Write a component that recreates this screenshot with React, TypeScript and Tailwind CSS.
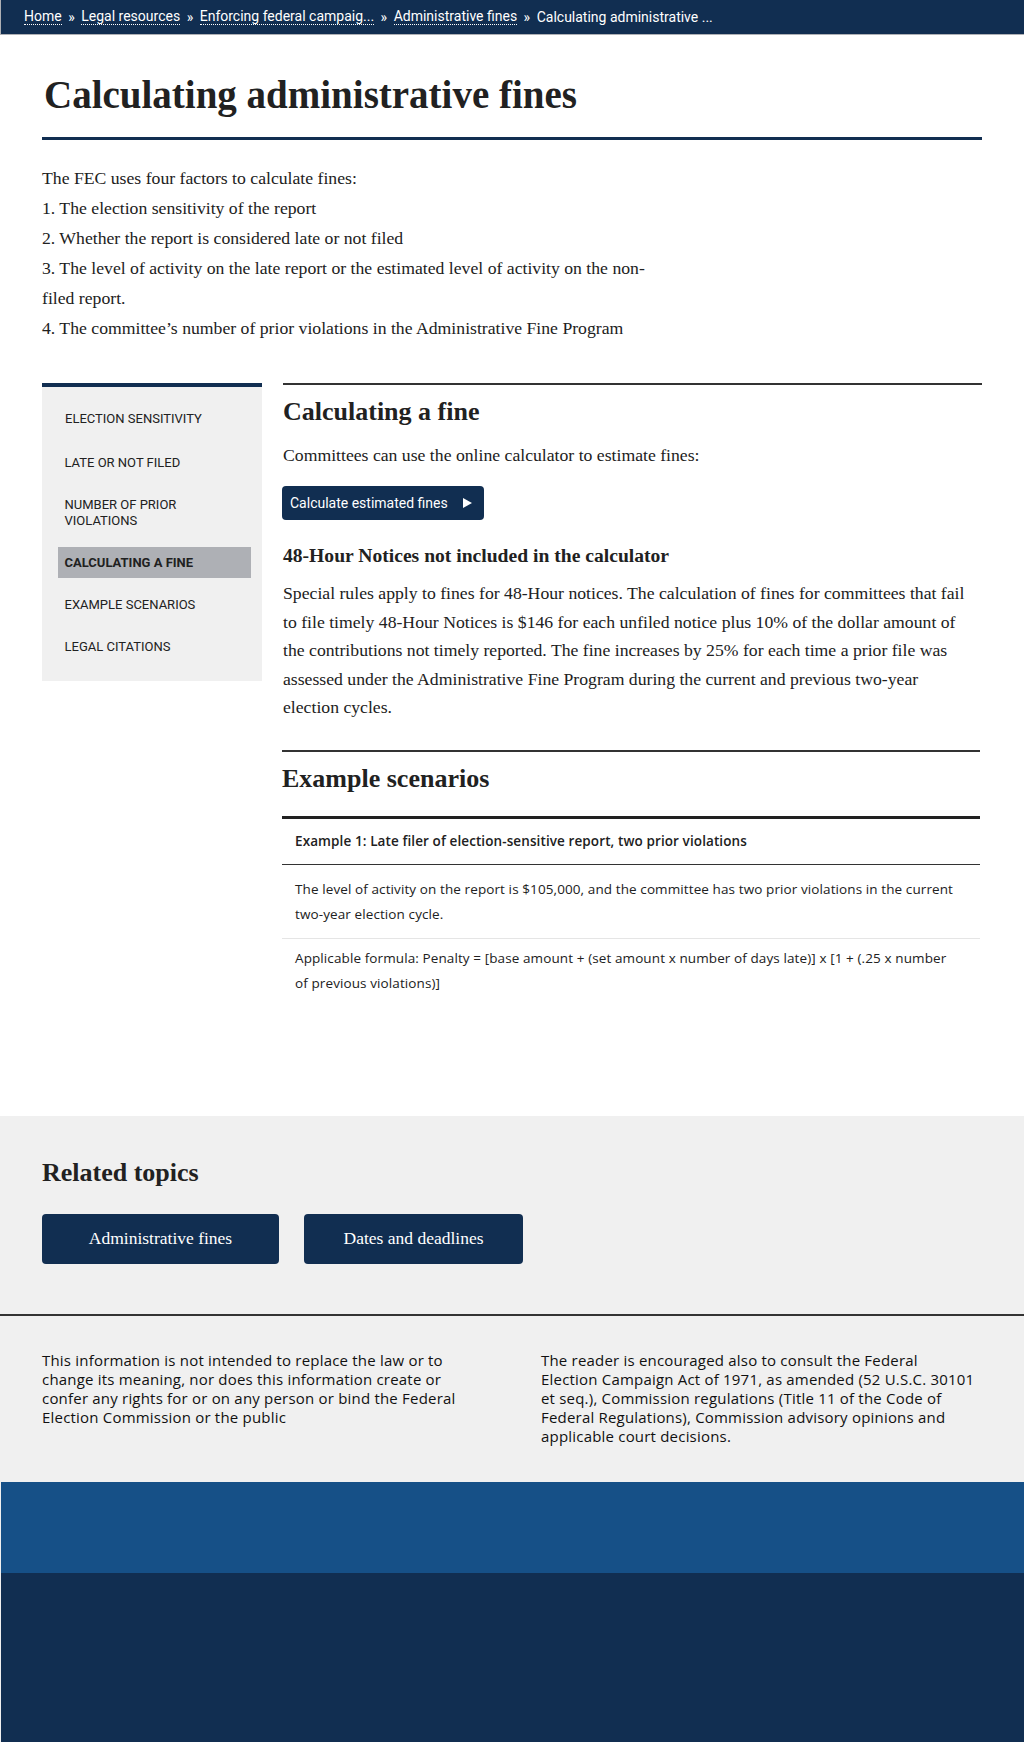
import React from "react";

const serif = { fontFamily: '"Liberation Serif", "Times New Roman", serif' };
const sans = { fontFamily: 'Roboto, "Liberation Sans", Arial, sans-serif' };
const wide = { fontFamily: '"Open Sans", Roboto, Arial, sans-serif' };

function Crumb({ children }: { children: React.ReactNode }) {
  return (
    <span className="border-b border-dotted border-white leading-[15px]">{children}</span>
  );
}

function Sep() {
  return <span className="mx-[6.5px]">»</span>;
}

const navItems = [
  "Election sensitivity",
  "Late or not filed",
  "Number of prior violations",
  "Calculating a fine",
  "Example scenarios",
  "Legal citations",
];

export default function App() {
  return (
    <div className="w-[1024px] bg-white text-[#212121]" style={sans}>
      {/* Breadcrumb */}
      <div className="h-[35px] bg-[#112e51] border-l border-b border-[#aeb0b5] flex items-center pl-[23px] text-[14px] text-white">
        <Crumb>Home</Crumb>
        <Sep />
        <Crumb>Legal resources</Crumb>
        <Sep />
        <Crumb>Enforcing federal campaig...</Crumb>
        <Sep />
        <Crumb>Administrative fines</Crumb>
        <Sep />
        <span>Calculating administrative ...</span>
      </div>

      <div className="px-[42px]">
        {/* Title */}
        <div className="pt-[37px] pb-[19px] border-b-[3px] border-[#112e51]">
          <h1 className="text-[39px] leading-[46px] font-bold pl-[2px]" style={serif}>
            Calculating administrative fines
          </h1>
        </div>

        {/* Intro */}
        <div className="mt-[23px] max-w-[625px] text-[17.7px] leading-[30px]" style={serif}>
          The FEC uses four factors to calculate fines:
          <br />
          1. The election sensitivity of the report
          <br />
          2. Whether the report is considered late or not filed
          <br />
          3. The level of activity on the late report or the estimated level of activity on the non-filed report.
          <br />
          4. The committee’s number of prior violations in the Administrative Fine Program
        </div>

        {/* Sidebar + main */}
        <div className="mt-[40px] grid grid-cols-[220px_1fr] gap-[21px] pb-[119px] items-start">
          <nav className="border-t-4 border-[#112e51] bg-[#f0f0f0] pt-[16px] pb-[19px] pl-[16px] pr-[11px]">
            <ul className="flex flex-col gap-[11px]">
              {navItems.map((item, i) => {
                const active = item === "Calculating a fine";
                return (
                  <li
                    key={item}
                    className={
                      active
                        ? "bg-[#aeb0b5] px-[6.5px] py-[7.5px] text-[13px] leading-[16px] uppercase font-bold"
                        : i === 0
                        ? "px-[7px] py-[7.5px] mb-[2px] text-[13px] leading-[16px] uppercase"
                        : "px-[6.5px] py-[7.5px] text-[13px] leading-[16px] uppercase"
                    }
                  >
                    {item === "Number of prior violations" ? (
                      <>
                        Number of prior
                        <br />
                        violations
                      </>
                    ) : (
                      item
                    )}
                  </li>
                );
              })}
            </ul>
          </nav>

          <main>
            <section className="border-t-2 border-[#333333]">
              <h2 className="mt-[11px] text-[26px] leading-[31px] font-bold" style={serif}>
                Calculating a fine
              </h2>
              <p className="mt-[14px] text-[17.7px] leading-[28.5px]" style={serif}>
                Committees can use the online calculator to estimate fines:
              </p>
              <button className="mt-[16.5px] h-[34px] w-[202px] -ml-px rounded-[4px] bg-[#112e51] text-white text-[14px] flex items-center pl-[8px]">
                <span>Calculate estimated fines</span>
                <svg className="ml-[15px]" width="9" height="10" viewBox="0 0 9 10">
                  <path d="M0 0 L9 5 L0 10 Z" fill="white" />
                </svg>
              </button>
              <h3 className="mt-[24px] text-[19.6px] leading-[24px] font-bold" style={serif}>
                48-Hour Notices not included in the calculator
              </h3>
              <p className="mt-[11px] pr-[16px] text-[17.7px] leading-[28.5px]" style={serif}>
                Special rules apply to fines for 48-Hour notices. The calculation of fines for committees that fail to file timely 48-Hour Notices is $146 for each unfiled notice plus 10% of the dollar amount of the contributions not timely reported. The fine increases by 25% for each time a prior file was assessed under the Administrative Fine Program during the current and previous two-year election cycles.
              </p>
            </section>

            <section className="mt-[28px] border-t-2 border-[#333333] -ml-px mr-[2px]">
              <h2 className="mt-[11px] text-[26px] leading-[31px] font-bold" style={serif}>
                Example scenarios
              </h2>
              <div className="mt-[22px] border-t-[3px] border-[#212121]" style={wide}>
                <div className="pt-[11px] pb-[12px] pl-[13px] text-[13.5px] leading-[22px] tracking-[0.1px] font-semibold border-b border-[#333333]">
                  Example 1: Late filer of election-sensitive report, two prior violations
                </div>
                <div className="pt-[12px] pb-[10px] pl-[13px] pr-[24px] text-[13.5px] leading-[25.5px] tracking-[0.1px] border-b border-[#e5e5e5]">
                  The level of activity on the report is $105,000, and the committee has two prior violations in the current two-year election cycle.
                </div>
                <div className="pt-[7px] pl-[13px] pr-[24px] text-[13.5px] leading-[25.5px] tracking-[0.1px]">
                  Applicable formula: Penalty = [base amount + (set amount x number of days late)] x [1 + (.25 x number of previous violations)]
                </div>
              </div>
            </section>
          </main>
        </div>
      </div>

      {/* Related topics */}
      <div className="bg-[#f0f0f0] border-b-2 border-[#333333] px-[42px] pt-[41.5px] pb-[50px]">
        <h2 className="text-[26px] leading-[31px] font-bold" style={serif}>
          Related topics
        </h2>
        <div className="mt-[25.5px] flex gap-[25px]">
          <a className="w-[237px] h-[50px] rounded-[4px] bg-[#112e51] text-white text-[17.5px] flex items-center justify-center" style={serif}>
            Administrative fines
          </a>
          <a className="w-[219px] h-[50px] rounded-[4px] bg-[#112e51] text-white text-[17.5px] flex items-center justify-center" style={serif}>
            Dates and deadlines
          </a>
        </div>
      </div>

      {/* Disclaimer */}
      <div
        className="bg-[#f0f0f0] pl-[42px] pr-[42px] pt-[35.5px] pb-[35.5px] grid grid-cols-[440px_436px] gap-[59px] text-[15px] leading-[19px] tracking-[0.2px] text-[#111111]"
        style={wide}
      >
        <p>
          This information is not intended to replace the law or to change its meaning, nor does this information create or confer any rights for or on any person or bind the Federal Election Commission or the public
        </p>
        <p>
          The reader is encouraged also to consult the Federal
          <br />
          Election Campaign Act of 1971, as amended (52 U.S.C. 30101 et seq.), Commission regulations (Title 11 of the Code of Federal Regulations), Commission advisory opinions and applicable court decisions.
        </p>
      </div>

      {/* Footer bands */}
      <div className="h-[91px] bg-[#165087] border-l border-[#f0f0f0]" />
      <div className="h-[169px] bg-[#112e51] border-l border-[#f0f0f0]" />
    </div>
  );
}
